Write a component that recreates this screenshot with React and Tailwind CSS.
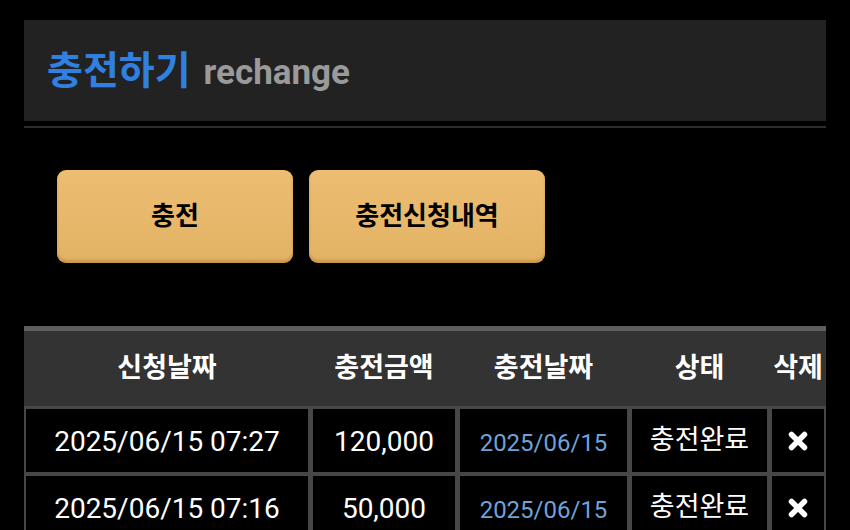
import React from "react";

const rows = [
  { reqDate: "2025/06/15 07:27", amount: "120,000", chargeDate: "2025/06/15", status: "충전완료" },
  { reqDate: "2025/06/15 07:16", amount: "50,000", chargeDate: "2025/06/15", status: "충전완료" },
];

const cols = "grid grid-cols-[282px_142px_167px_135px_52px] gap-x-[5px] px-[2px]";

const XMark = () => (
  <svg width="22" height="22" viewBox="0 0 22 22">
    <path d="M4.5 4.5 L17.5 17.5 M17.5 4.5 L4.5 17.5" stroke="#fff" strokeWidth="5.5" strokeLinecap="round" />
  </svg>
);

export default function App() {
  return (
    <div className="w-[850px] h-[530px] overflow-hidden bg-black pt-[20px] px-[24px] font-['Roboto','Noto_Sans_CJK_KR',sans-serif]">
      <div className="h-[101px] bg-[#222] flex items-baseline pl-[23px] pt-[28px]">
        <span className="text-[39px] font-bold text-[#2f80e0] leading-[46px]">충전하기</span>
        <span className="ml-[13px] text-[35px] font-bold text-[#9a9a9a] leading-[46px]">rechange</span>
      </div>
      <div className="mt-[5px] h-[2px] bg-[#2c2c2c]" />

      <div className="mt-[42px] ml-[33px] flex gap-[16px]">
        <button className="w-[236px] h-[93px] rounded-[9px] bg-gradient-to-b from-[#ecbd72] to-[#e3b264] shadow-[0_3px_4px_rgba(0,0,0,0.6),inset_0_-3px_3px_rgba(150,100,30,0.35)] text-[26px] font-bold text-black">
          충전
        </button>
        <button className="w-[236px] h-[93px] rounded-[9px] bg-gradient-to-b from-[#ecbd72] to-[#e3b264] shadow-[0_3px_4px_rgba(0,0,0,0.6),inset_0_-3px_3px_rgba(150,100,30,0.35)] text-[26px] font-bold text-black">
          충전신청내역
        </button>
      </div>

      <div className="mt-[63px] border-t-[5px] border-[#5e5e5e]">
        <div className={`${cols} h-[75px] items-center bg-[#333] text-white text-[27px] font-bold`}>
          <div className="text-center">신청날짜</div>
          <div className="text-center">충전금액</div>
          <div className="text-center">충전날짜</div>
          <div className="text-center whitespace-nowrap">상태</div>
          <div className="text-center whitespace-nowrap -mx-[6px]">삭제</div>
        </div>
        <div className={`${cols} bg-[#474747] pt-[3px] gap-y-[4px] pb-[4px]`}>
          {rows.map((r, i) => (
            <React.Fragment key={i}>
              <div className="h-[63px] bg-black flex items-center justify-center text-white text-[28px] pt-[2px]">{r.reqDate}</div>
              <div className="h-[63px] bg-black flex items-center justify-center text-white text-[28px] pt-[2px]">{r.amount}</div>
              <div className="h-[63px] bg-black flex items-center justify-center text-[#6fa2da] text-[24px] pt-[5px]">{r.chargeDate}</div>
              <div className="h-[63px] bg-black flex items-center justify-center text-white text-[27px]">{r.status}</div>
              <div className="h-[63px] bg-black flex items-center justify-center"><XMark /></div>
            </React.Fragment>
          ))}
        </div>
      </div>
    </div>
  );
}
